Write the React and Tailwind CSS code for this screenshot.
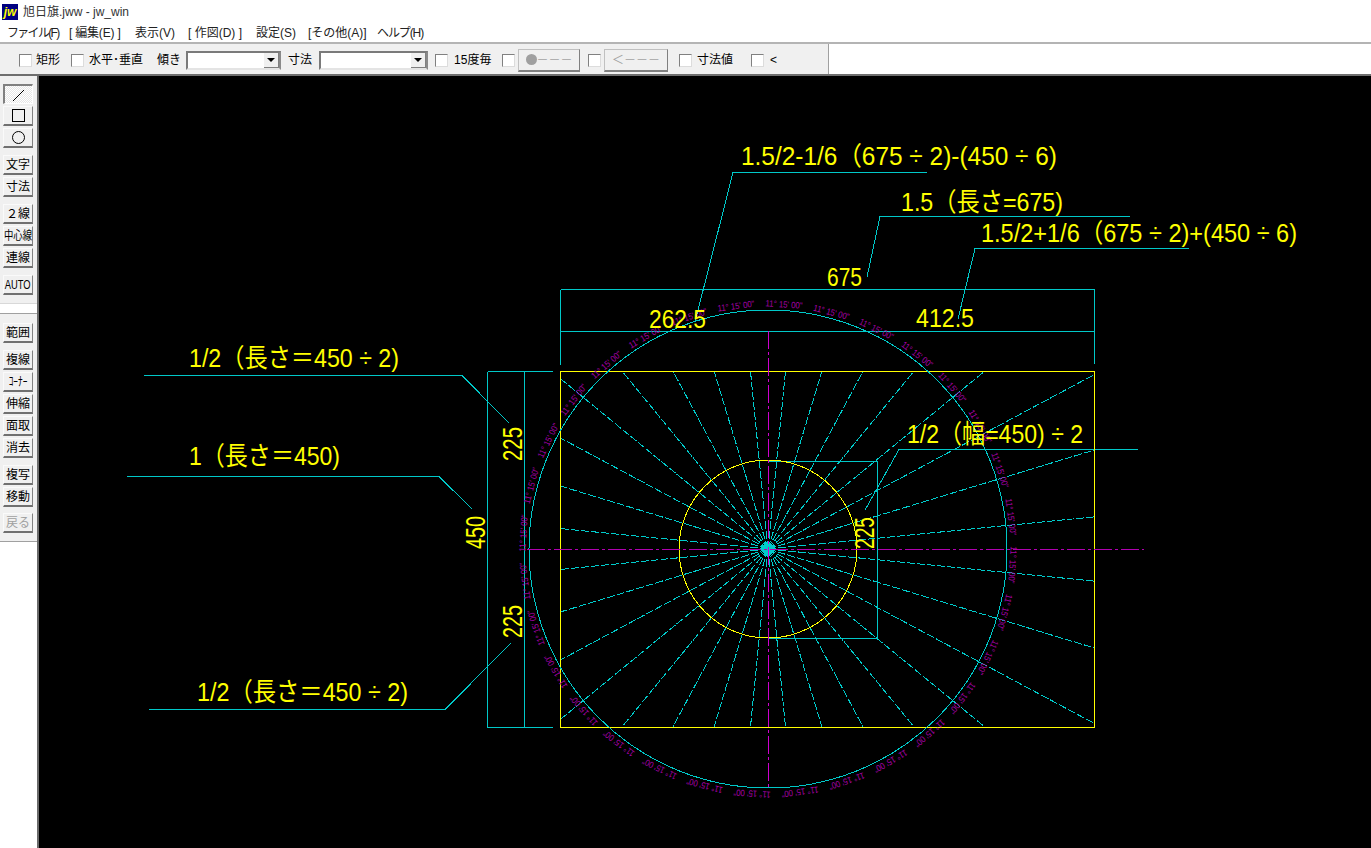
const CX = 768;
const CY = 549;
const RECT = { left: 560.5, right: 1094.5, top: 371.5, bottom: 727.5 };

const menus = [
  { label: 'ファイル(F)', className: 'w-[62px] tracking-[-1.7px]' },
  { label: '[ 編集(E) ]', className: 'w-[66px] tracking-[-0.2px]' },
  { label: '表示(V)', className: 'w-[53px]' },
  { label: '[ 作図(D) ]', className: 'w-[68px]' },
  { label: '設定(S)', className: 'w-[52px]' },
  { label: '[その他(A)]', className: 'w-[69px]' },
  { label: 'ヘルプ(H)', className: 'w-[60px] tracking-[-1.1px]' },
];

// End of a ray on the flag's rectangle
const rayEnd = (deg) => {
  const rad = (deg * Math.PI) / 180;
  const dx = Math.sin(rad);
  const dy = -Math.cos(rad);
  const tx = dx > 0 ? (RECT.right - CX) / dx : (RECT.left - CX) / dx;
  const ty = dy > 0 ? (RECT.bottom - CY) / dy : (RECT.top - CY) / dy;
  const t = Math.min(tx, ty);
  return [CX + dx * t, CY + dy * t];
};

const rays = Array.from({ length: 32 }, (_, i) => 5.625 + i * 11.25);
const angleLabels = Array.from({ length: 32 }, (_, i) => 3.75 + i * 11.25);

const cyanLines = [
  'M560.5 289.5H1094.5M560.5 289.5V365M1094.5 289.5V364M560.5 331.5H1094.5',
  'M487.5 371.5V727.5M487.5 371.5H553M487.5 727.5H553M524.5 371.5V727.5',
  'M768 461.5H877.5V638.5H768',
  'M695 322L733 172.5H927',
  'M867 277L880 216.5H1130',
  'M958 319L975 248.5H1189',
  'M144 375.5H462L509 423',
  'M127 476.5H439L472 509',
  'M149 709.5H445L511 643',
  'M865 510L899 449.5H1138',
];

const labels = [
  { text: '1.5/2-1/6（675 ÷ 2)-(450 ÷ 6)', x: 741, y: 165, len: 316 },
  { text: '1.5（長さ=675)', x: 901, y: 211, len: 162 },
  { text: '1.5/2+1/6（675 ÷ 2)+(450 ÷ 6)', x: 981, y: 242, len: 316 },
  { text: '675', x: 827, y: 286, len: 35 },
  { text: '262.5', x: 649, y: 328, len: 57 },
  { text: '412.5', x: 916, y: 327, len: 58 },
  { text: '1/2（長さ＝450 ÷ 2)', x: 189, y: 367, len: 210 },
  { text: '1（長さ＝450)', x: 189, y: 465, len: 151 },
  { text: '1/2（長さ＝450 ÷ 2)', x: 197, y: 701, len: 211 },
  { text: '1/2（幅=450) ÷ 2', x: 907, y: 443, len: 176 },
];

const sideLabels = [
  { text: '225', x: 522, y: 461, len: 34 },
  { text: '450', x: 485, y: 549, len: 33 },
  { text: '225', x: 522, y: 638, len: 33 },
  { text: '225', x: 874, y: 549, len: 32 },
];

const Check = ({ className = '' }) => (
  <span className={`h-[13px] w-[13px] shrink-0 border border-t-[#808080] border-l-[#808080] border-r-[#dcdcdc] border-b-[#dcdcdc] bg-white ${className}`} />
);

const Select = ({ className = '' }) => (
  <div className={`flex h-[19px] items-center justify-end border-2 border-t-[#7a7a7a] border-l-[#7a7a7a] border-r-[#8a8a8a] border-b-[#e4e4e4] bg-white ${className}`}>
    <div className="flex h-[15px] w-[15px] items-center justify-center border-r border-b border-[#808080] bg-[#f0f0f0]">
      <span className="h-0 w-0 border-x-4 border-t-4 border-x-transparent border-t-black" />
    </div>
  </div>
);

const GreyButton = ({ children, className = '' }) => (
  <div className={`flex h-[23px] items-center justify-center border border-t-[#c0c0c0] border-l-[#c0c0c0] border-r-[#808080] border-b-2 border-b-[#808080] text-[12px] leading-none text-[#a0a0a0] ${className}`}>
    {children}
  </div>
);

const ToolButton = ({ children, selected, disabled }) => (
  <div
    className={`flex h-[20px] w-[30px] items-center justify-center overflow-hidden text-[12px] leading-none ${
      selected
        ? 'border-t-2 border-l-2 border-t-[#808080] border-l-[#808080] border-r border-b border-r-white border-b-white bg-[repeating-conic-gradient(#ffffff_0_25%,#e6e6e6_0_50%)] bg-[length:2px_2px]'
        : 'border border-t-[#fafafa] border-l-[#fafafa] border-r-[#808080] border-b-2 border-b-[#707070] bg-[#f0f0f0]'
    } ${disabled ? 'text-[#a0a0a0]' : 'text-black'}`}
  >
    {children}
  </div>
);

const Squeezed = ({ children }) => (
  <span className="inline-block scale-x-[0.78] whitespace-nowrap">{children}</span>
);

const SideBar = () => (
  <aside className="flex w-[39px] shrink-0 flex-col border-r-2 border-[#6a6a6a] bg-white pl-[3px]">
    <div className="-ml-[3px] flex h-[227px] flex-col bg-[#f0f0f0] pt-2 pl-[3px]">
      <div className="flex flex-col gap-[2px]">
        <ToolButton selected>
          <svg width="14" height="14" viewBox="0 0 14 14" shapeRendering="crispEdges">
            <path d="M1 13L12 2" stroke="#000" fill="none" />
          </svg>
        </ToolButton>
        <ToolButton>
          <svg width="15" height="15" viewBox="0 0 15 15" shapeRendering="crispEdges">
            <rect x="1.5" y="1.5" width="12" height="12" stroke="#000" fill="none" />
          </svg>
        </ToolButton>
        <ToolButton>
          <svg width="15" height="15" viewBox="0 0 15 15">
            <circle cx="7.5" cy="7.5" r="6" stroke="#000" fill="none" />
          </svg>
        </ToolButton>
      </div>
      <div className="mt-[7px] flex flex-col gap-[2px]">
        <ToolButton>文字</ToolButton>
        <ToolButton>寸法</ToolButton>
      </div>
      <div className="mt-[7px] flex flex-col gap-[2px]">
        <ToolButton>２線</ToolButton>
        <ToolButton><Squeezed>中心線</Squeezed></ToolButton>
        <ToolButton>連線</ToolButton>
      </div>
      <div className="mt-[7px]">
        <ToolButton><Squeezed>AUTO</Squeezed></ToolButton>
      </div>
    </div>
    <div className="-ml-[3px] h-[11px] border-t border-b border-t-[#d8d8d8] border-b-[#a0a0a0] bg-white" />
    <div className="-ml-[3px] flex h-[227px] flex-col bg-[#f0f0f0] pt-[9px] pl-[3px]">
      <ToolButton>範囲</ToolButton>
      <div className="mt-[7px] flex flex-col gap-[2px]">
        <ToolButton>複線</ToolButton>
        <ToolButton><Squeezed>ｺｰﾅｰ</Squeezed></ToolButton>
        <ToolButton>伸縮</ToolButton>
        <ToolButton>面取</ToolButton>
        <ToolButton>消去</ToolButton>
      </div>
      <div className="mt-[7px] flex flex-col gap-[2px]">
        <ToolButton>複写</ToolButton>
        <ToolButton>移動</ToolButton>
      </div>
      <div className="mt-[6px]">
        <ToolButton disabled>戻る</ToolButton>
      </div>
    </div>
    <div className="-ml-[3px] flex-1 border-t border-[#a0a0a0] bg-white" />
  </aside>
);

const Drawing = () => (
  <svg className="h-full w-full" viewBox="39 76 1332 772" fill="none">
    <g shapeRendering="crispEdges">
      {rays.map((deg) => {
        const [x, y] = rayEnd(deg);
        return (
          <line key={deg} x1={CX} y1={CY} x2={x} y2={y} stroke="#00cccc" strokeDasharray="8 2" />
        );
      })}
      {cyanLines.map((d) => (
        <path key={d} d={d} stroke="#00c8c8" />
      ))}
      <path d="M560.5 371.5H1094.5V727.5H560.5Z" stroke="#ffff00" />
      <circle cx={CX} cy={CY} r="89" stroke="#ffff00" />
      <circle cx={CX} cy={CY} r="239" stroke="#00c8c8" />
      <circle cx={CX} cy={CY} r="3.5" fill="#00c8c8" />
      <path d="M768.5 331V789" stroke="#d000d0" strokeDasharray="18 3 3 3" />
      <path d="M527 549.5H1144" stroke="#b000b0" strokeDasharray="18 3 3 3" />
    </g>
    {angleLabels.map((deg) => (
      <text
        key={deg}
        x={CX}
        y={CY - 242}
        fill="#a800a8"
        fontSize="9"
        textAnchor="middle"
        textLength="37"
        lengthAdjust="spacingAndGlyphs"
        transform={`rotate(${deg} ${CX} ${CY})`}
      >
        {'11° 15\' 00"'}
      </text>
    ))}
    {labels.map((l) => (
      <text key={l.text + l.x} x={l.x} y={l.y} fill="#ffff00" fontSize="26" textLength={l.len} lengthAdjust="spacingAndGlyphs">
        {l.text}
      </text>
    ))}
    {sideLabels.map((l) => (
      <text
        key={l.x + '-' + l.y}
        x={l.x}
        y={l.y}
        fill="#ffff00"
        fontSize="27"
        textLength={l.len}
        lengthAdjust="spacingAndGlyphs"
        transform={`rotate(-90 ${l.x} ${l.y})`}
      >
        {l.text}
      </text>
    ))}
  </svg>
);

export default function App() {
  return (
    <div className="flex h-screen w-full flex-col overflow-hidden bg-white font-['Liberation_Sans','Noto_Sans_CJK_JP',sans-serif] text-[12px] text-black">
      {/* Title bar */}
      <div className="flex h-[23px] shrink-0 items-center pl-[2px]">
        <div className="flex h-4 w-4 items-center justify-center bg-[#000080] text-[12px] leading-none font-bold text-[#ffff00] italic">
          jw
        </div>
        <span className="ml-[5px] text-[12px] text-[#333333]">旭日旗.jww - jw_win</span>
      </div>

      {/* Menu */}
      <div className="flex h-[19px] shrink-0 items-center pl-[7px] text-[#222222]">
        {menus.map((m) => (
          <span key={m.label} className={`${m.className} whitespace-nowrap`}>{m.label}</span>
        ))}
      </div>

      {/* Option bar */}
      <div className="flex h-[34px] shrink-0 border-t-2 border-b-2 border-t-[#b4b4b4] border-b-[#6e6e6e]">
        <div className="flex w-[829px] items-center border-r border-r-[#a0a0a0] bg-[#f0f0f0] pt-[2px] pl-[19px]">
          <Check />
          <span className="ml-[4px]">矩形</span>
          <Check className="ml-[11px]" />
          <span className="ml-[5px] w-[52px] whitespace-nowrap">水平･垂直</span>
          <span className="ml-4">傾き</span>
          <Select className="ml-[5px] w-[95px]" />
          <span className="ml-[7px]">寸法</span>
          <Select className="ml-[7px] w-[109px]" />
          <Check className="ml-[7px]" />
          <span className="ml-[6px] w-[40px] whitespace-nowrap">15度毎</span>
          <Check className="ml-[8px]" />
          <GreyButton className="ml-[3px] w-[62px] gap-0">
            <span className="h-[11px] w-[11px] rounded-full bg-[#a0a0a0]" />
            <span>－－－</span>
          </GreyButton>
          <Check className="ml-[8px]" />
          <GreyButton className="ml-[3px] w-[64px]">＜－－－</GreyButton>
          <Check className="ml-[11px]" />
          <span className="ml-[5px] w-[36px]">寸法値</span>
          <Check className="ml-[18px]" />
          <span className="ml-[6px]">&lt;</span>
        </div>
      </div>

      {/* Main */}
      <div className="flex min-h-0 flex-1">
        <SideBar />
        <div className="min-w-0 flex-1 bg-black">
          <Drawing />
        </div>
      </div>
    </div>
  );
}
